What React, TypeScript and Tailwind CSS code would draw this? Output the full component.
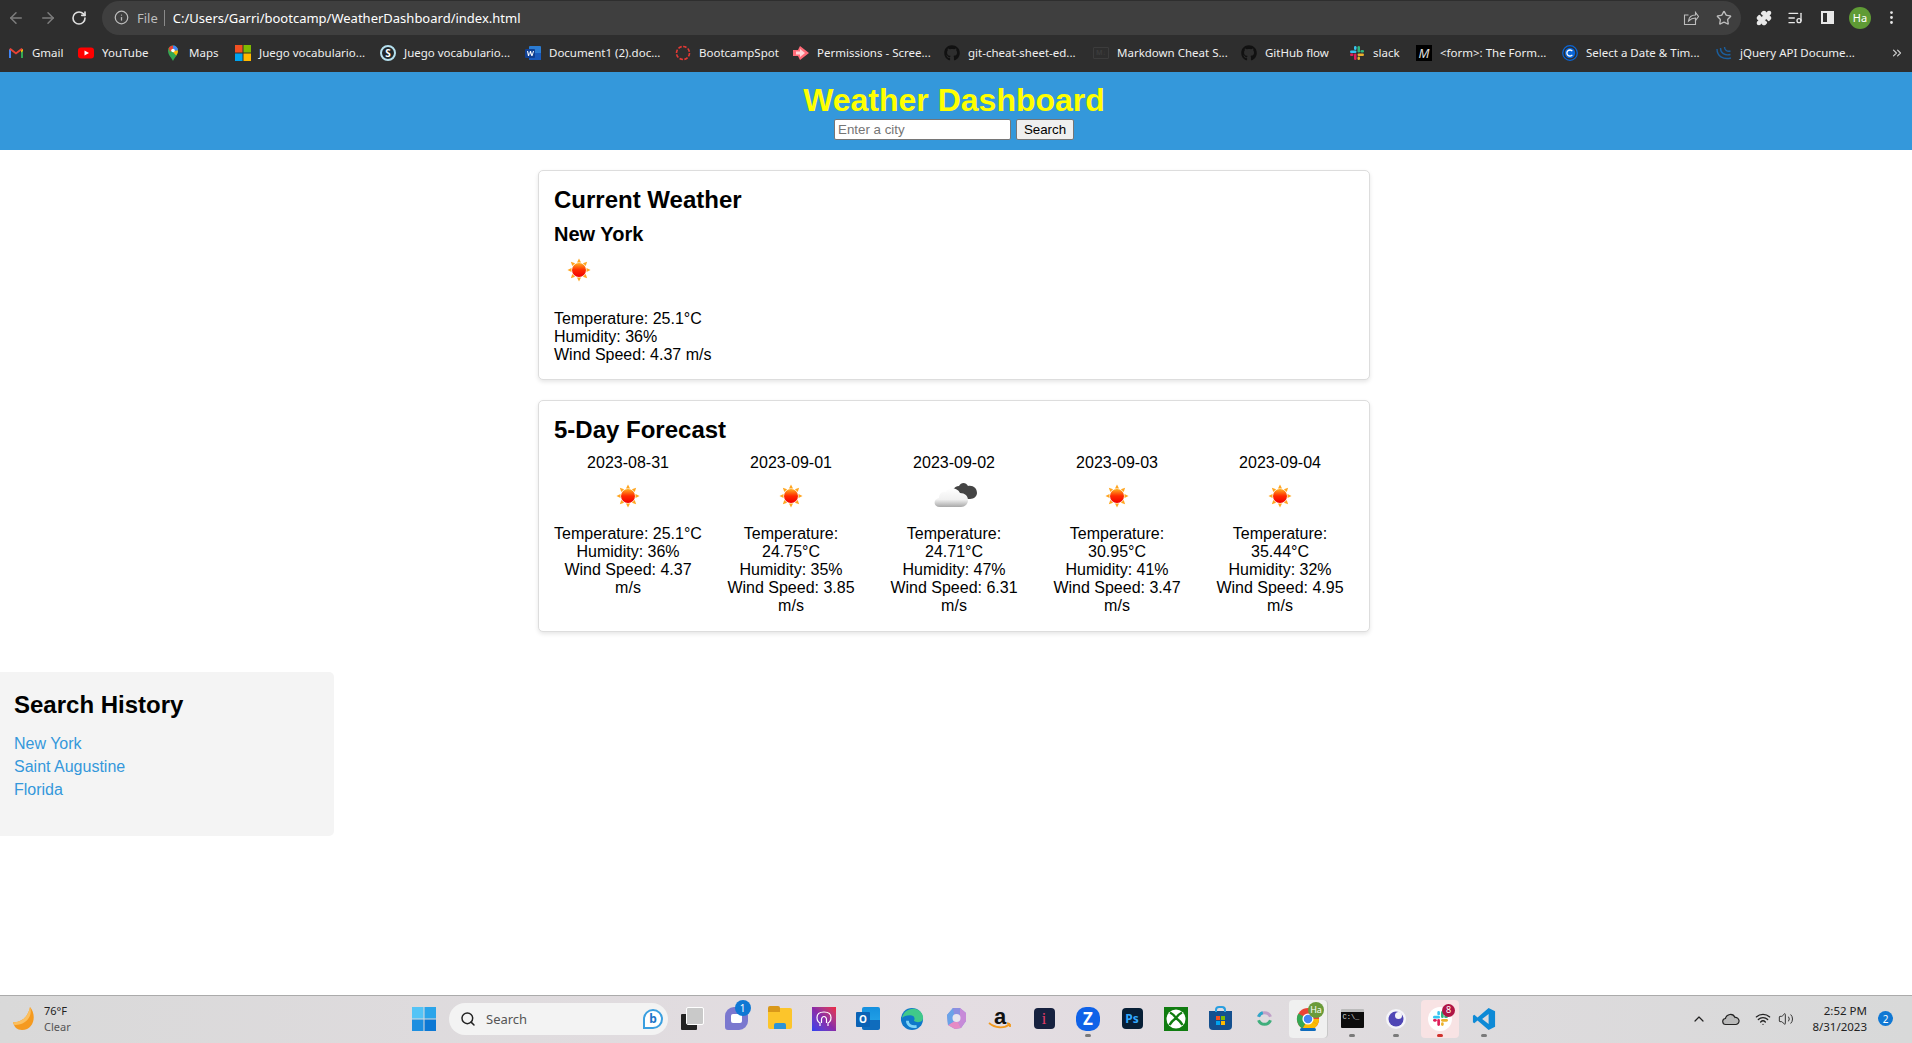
import type { ReactNode } from "react";
import { ArrowLeft, ArrowRight, RotateCw, Info, Star, Puzzle, ListMusic, MoreVertical, ChevronsRight, ChevronUp, Search, Wifi, Volume2 } from "lucide-react";
import { FaGithub } from "react-icons/fa";

const Sun = () => (
  <svg width="50" height="50" viewBox="0 0 50 50">
    <defs>
      <linearGradient id="sunfill" x1="0" y1="0" x2="0" y2="1">
        <stop offset="0" stopColor="#ffb020" />
        <stop offset="0.5" stopColor="#ff2a00" />
        <stop offset="1" stopColor="#f00000" />
      </linearGradient>
    </defs>
    {[0, 45, 90, 135, 180, 225, 270, 315].map((a) => (
      <polygon key={a} points="25,13.5 23,17.5 27,17.5" fill="#ffa51f" transform={`rotate(${a} 25 25)`} />
    ))}
    <circle cx="25" cy="25" r="7" fill="url(#sunfill)" />
  </svg>
);

const Cloud = () => (
  <svg width="50" height="50" viewBox="0 0 50 50">
    <defs>
      <linearGradient id="cloudfill" x1="0" y1="0" x2="0" y2="1">
        <stop offset="0" stopColor="#ffffff" />
        <stop offset="0.6" stopColor="#f0f0f0" />
        <stop offset="1" stopColor="#a8a8a8" />
      </linearGradient>
    </defs>
    <path d="M24 27c-3-6 1-12 6-12 2-4 7-4 9 0 5-1 9 2 9 7 0 3-3 6-7 6H30z" fill="#444" />
    <path d="M11 36c-7 0-7-8-1-9 0-4 3-7 7-6 2-5 11-5 14 1 5 0 8 3 8 7 0 4-3 7-7 7z" fill="url(#cloudfill)" />
  </svg>
);

const forecast = [
  { date: "2023-08-31", temp: "25.1", hum: "36", wind: "4.37", cloud: false },
  { date: "2023-09-01", temp: "24.75", hum: "35", wind: "3.85", cloud: false },
  { date: "2023-09-02", temp: "24.71", hum: "47", wind: "6.31", cloud: true },
  { date: "2023-09-03", temp: "30.95", hum: "41", wind: "3.47", cloud: false },
  { date: "2023-09-04", temp: "35.44", hum: "32", wind: "4.95", cloud: false },
];

const Gmail = () => (
  <svg width="16" height="16" viewBox="0 0 16 16">
    <path d="M1 13V4l2 1v8z" fill="#4285f4" />
    <path d="M15 13V4l-2 1v8z" fill="#34a853" />
    <path d="M1 4.2 2.6 3 8 7.2 13.4 3 15 4.2 8 9.6z" fill="#ea4335" />
    <path d="M13 5.5 15 4v2l-2 1.5z" fill="#fbbc04" />
  </svg>
);
const YouTube = () => (
  <svg width="16" height="16" viewBox="0 0 16 16">
    <rect x="0" y="2.5" width="16" height="11" rx="3" fill="#f00" />
    <polygon points="6.5,5.5 11,8 6.5,10.5" fill="#fff" />
  </svg>
);
const Maps = () => (
  <svg width="16" height="18" viewBox="0 0 16 18">
    <path d="M8 17C6 13 3 11 3 6.5a5 5 0 0 1 10 0C13 11 10 13 8 17z" fill="#34a853" />
    <path d="M3.6 4.2A5 5 0 0 1 8 1.5V4.5L5 8z" fill="#ea4335" />
    <path d="M8 1.5a5 5 0 0 1 5 5l-3 .5-2-2.5z" fill="#4285f4" />
    <path d="M13 6.5c0 2-.8 3.5-1.8 5L7 7z" fill="#fbbc04" />
    <circle cx="8" cy="6.5" r="1.8" fill="#fff" />
  </svg>
);
const Microsoft = () => (
  <svg width="16" height="16" viewBox="0 0 16 16">
    <rect width="7.5" height="7.5" fill="#f25022" />
    <rect x="8.5" width="7.5" height="7.5" fill="#7fba00" />
    <rect y="8.5" width="7.5" height="7.5" fill="#00a4ef" />
    <rect x="8.5" y="8.5" width="7.5" height="7.5" fill="#ffb900" />
  </svg>
);
const SkypeS = () => (
  <span className="flex h-4 w-4 items-center justify-center rounded-full border-2 border-[#b5e0ee] bg-[#20262a] text-[10px] font-bold text-white">
    S
  </span>
);
const Word = () => (
  <svg width="16" height="16" viewBox="0 0 16 16">
    <rect x="4" y="1" width="12" height="14" rx="1" fill="#2b7cd3" />
    <rect x="4" y="8" width="12" height="7" fill="#185abd" />
    <rect x="0" y="4" width="10" height="9" rx="1" fill="#103f91" />
    <path d="M2 6h1l1 3.5L5 6h1l1 3.5L8 6h1l-1.5 5h-1L5 8l-1 3H3z" fill="#fff" />
  </svg>
);
const Ring = () => (
  <svg width="16" height="16" viewBox="0 0 16 16">
    <circle cx="8" cy="8" r="6.5" fill="none" stroke="#e53935" strokeWidth="1.6" strokeDasharray="3.5 1.5" />
  </svg>
);
const Permissions = () => (
  <svg width="16" height="16" viewBox="0 0 16 16">
    <path d="M0 5h5l2-4 9 7-9 7-2-4H0z" fill="#ff6b78" />
    <path d="M3 6.5h4V4l5 4-5 4V9.5H3z" fill="#ffd5d8" />
  </svg>
);
const Markdown = () => (
  <span className="flex h-[12px] w-4 items-center justify-center rounded-[1px] border border-[#3c3c3c] text-[7px] font-bold leading-none text-[#3c3c3c]">
    M↓
  </span>
);
const Slack = ({ size = 16 }: { size?: number }) => (
  <svg width={size} height={size} viewBox="0 0 16 16">
    <rect x="1" y="5.5" width="6.5" height="2.5" rx="1.25" fill="#36c5f0" />
    <rect x="5" y="1" width="2.5" height="4" rx="1.25" fill="#36c5f0" />
    <rect x="8.5" y="1" width="2.5" height="6.5" rx="1.25" fill="#2eb67d" />
    <rect x="11.5" y="5" width="3.5" height="2.5" rx="1.25" fill="#2eb67d" />
    <rect x="8.5" y="8.5" width="6.5" height="2.5" rx="1.25" fill="#ecb22e" />
    <rect x="8.5" y="11.5" width="2.5" height="3.5" rx="1.25" fill="#ecb22e" />
    <rect x="5" y="8.5" width="2.5" height="6.5" rx="1.25" fill="#e01e5a" />
    <rect x="1" y="8.5" width="3.5" height="2.5" rx="1.25" fill="#e01e5a" />
  </svg>
);
const MdnM = () => (
  <span className="flex h-4 w-4 items-center justify-center bg-black text-[13px] italic text-[#ddd]">M</span>
);
const Calendly = () => (
  <svg width="16" height="16" viewBox="0 0 16 16">
    <circle cx="8" cy="8" r="7.3" fill="none" stroke="#0a66d8" strokeWidth="1.2" />
    <circle cx="8" cy="8" r="5.2" fill="#0a66d8" />
    <path d="M10.3 6.2A3 3 0 1 0 10.3 9.8" fill="none" stroke="#fff" strokeWidth="1.3" />
  </svg>
);
const JQuery = () => (
  <svg width="16" height="16" viewBox="0 0 16 16" fill="none" stroke="#1b5f9e" strokeWidth="1.4">
    <path d="M1 4c0 7 6 11 14 9" />
    <path d="M4.5 3c0 5 4 8 10 6.5" />
    <path d="M8.5 2c0 3 2.5 5 6 4" />
  </svg>
);

const bookmarks = [
  { icon: <Gmail />, label: "Gmail", w: "w-[70px]" },
  { icon: <YouTube />, label: "YouTube", w: "w-[87px]" },
  { icon: <Maps />, label: "Maps", w: "w-[70px]" },
  { icon: <Microsoft />, label: "Juego vocabulario...", w: "w-[145px]" },
  { icon: <SkypeS />, label: "Juego vocabulario...", w: "w-[145px]" },
  { icon: <Word />, label: "Document1 (2).doc...", w: "w-[150px]" },
  { icon: <Ring />, label: "BootcampSpot", w: "w-[118px]" },
  { icon: <Permissions />, label: "Permissions - Scree...", w: "w-[151px]" },
  { icon: <FaGithub className="text-[16px] text-[#111]" />, label: "git-cheat-sheet-ed...", w: "w-[149px]" },
  { icon: <Markdown />, label: "Markdown Cheat S...", w: "w-[148px]" },
  { icon: <FaGithub className="text-[16px] text-[#111]" />, label: "GitHub flow", w: "w-[108px]" },
  { icon: <Slack />, label: "slack", w: "w-[67px]" },
  { icon: <MdnM />, label: "<form>: The Form...", w: "w-[146px]" },
  { icon: <Calendly />, label: "Select a Date & Tim...", w: "w-[154px]" },
  { icon: <JQuery />, label: "jQuery API Docume...", w: "w-[150px]" },
];

function BrowserBar() {
  return (
    <div className="h-[72px] shrink-0 bg-[#2e2e2e] text-[#e8e8e8]">
      <div className="flex h-[35px] items-center">
        <div className="flex w-[102px] shrink-0 items-center gap-[14px] pl-[7px]">
          <ArrowLeft size={18} className="text-[#7d7d7d]" />
          <ArrowRight size={18} className="text-[#7d7d7d]" />
          <RotateCw size={16} strokeWidth={2.4} className="text-[#e0e0e0]" />
        </div>
        <div className="flex h-[34px] w-[1639px] shrink-0 items-center rounded-full bg-[#3f3f3f] pl-[12px] pr-[9px] font-['Noto_Sans',sans-serif]">
          <Info size={15} className="text-[#bdbdbd]" />
          <span className="ml-[8px] text-[13px] text-[#bdbdbd]">File</span>
          <span className="ml-[6px] h-[16px] w-px bg-[#8a8a8a]" />
          <span className="ml-[8px] text-[13px] text-white">C:/Users/Garri/bootcamp/WeatherDashboard/index.html</span>
          <span className="ml-auto flex items-center gap-[17px] text-[#bdbdbd]">
            <svg width="16" height="16" viewBox="0 0 16 16" fill="none" stroke="currentColor" strokeWidth="1.1">
              <path d="M12.5 9.5v5H1.5V5h4" />
              <path d="M5.5 11c.5-4 3-6 7-6V2.5l3 4-3 4V8c-3 0-5 1-7 3z" />
            </svg>
            <Star size={16} />
          </span>
        </div>
        <div className="flex flex-1 items-center pl-[15px]">
          <Puzzle size={16} fill="#e8e8e8" className="text-[#e8e8e8]" />
          <ListMusic size={16} className="ml-[15px]" />
          <span className="ml-[18px] flex h-[13px] w-[13px] justify-end border-2 border-[#e8e8e8]">
            <span className="h-full w-[5px] bg-[#e8e8e8]" />
          </span>
          <span className="ml-[15px] flex h-[22px] w-[22px] items-center justify-center rounded-full bg-[#5f9b35] font-['Noto_Sans',sans-serif] text-[11px] text-white">Ha</span>
          <MoreVertical size={17} className="ml-[12px]" />
        </div>
      </div>
      <div className="flex h-[35px] items-center pl-[8px] font-['Noto_Sans',sans-serif] text-[11.5px] text-[#f0f0f0]">
        {bookmarks.map((b, i) => (
          <div key={i} className={`${b.w} flex shrink-0 items-center gap-[8px] whitespace-nowrap`}>
            <span className="flex w-4 shrink-0 justify-center">{b.icon}</span>
            <span>{b.label}</span>
          </div>
        ))}
        <ChevronsRight size={14} className="ml-auto mr-[8px] text-[#cfcfcf]" />
      </div>
    </div>
  );
}

const TaskIcon = ({ children, dot, tile }: { children: ReactNode; dot?: string; tile?: string }) => (
  <div className="relative flex h-[44px] w-[44px] shrink-0 items-center justify-center">
    {tile && <span className={`absolute inset-y-[3px] inset-x-[3px] rounded-[4px] ${tile}`} />}
    <span className="relative flex items-center justify-center">{children}</span>
    {dot && <span className={`absolute bottom-[4px] left-1/2 h-[3px] w-[6px] -translate-x-1/2 rounded-full ${dot}`} />}
  </div>
);

function Taskbar() {
  return (
    <div className="flex h-[48px] shrink-0 items-center border-t border-[#ababab] bg-gradient-to-r from-[#d9d9d9] via-[#e4dde2] to-[#d8d9d9] pb-[2px] font-['Noto_Sans',sans-serif] text-[#222]">
      <div className="flex w-[412px] shrink-0 items-center pl-[13px]">
        <svg width="24" height="24" viewBox="0 0 24 24">
          <path d="M17 0C24 8 21 23 9 23 4 23 1 20 0 15 7 16 15 11 17 0z" fill="#f59a1f" />
          <path d="M17 0C20 8 14 18 2 18c-1 0-1.5-1-2-3C7 16 15 11 17 0z" fill="#fbc060" />
        </svg>
        <div className="ml-[7px] text-[11px] leading-[16px]">
          <div>76°F</div>
          <div className="text-[#555]">Clear</div>
        </div>
      </div>
      <svg width="24" height="24" viewBox="0 0 24 24" className="shrink-0">
        <rect x="0" y="0" width="11.5" height="11.5" fill="#54c4f6" />
        <rect x="12.5" y="0" width="11.5" height="11.5" fill="#2ba5ea" />
        <rect x="0" y="12.5" width="11.5" height="11.5" fill="#1d8fe0" />
        <rect x="12.5" y="12.5" width="11.5" height="11.5" fill="#0c78d4" />
      </svg>
      <div className="ml-[13px] flex h-[32px] w-[219px] shrink-0 items-center rounded-full bg-[#f3f3f3] pl-[11px] pr-[5px] text-[13px] text-[#555]">
        <Search size={16} strokeWidth={2.2} className="text-[#222]" />
        <span className="ml-[10px]">Search</span>
        <span className="ml-auto flex h-[20px] w-[20px] items-center justify-center rounded-full rounded-bl-[3px] border-2 border-[#3a9fe0] bg-white text-[12px] font-bold leading-none text-[#1b74c8]">b</span>
      </div>
      <div className="ml-[2px] flex items-center">
        <TaskIcon>
          <span className="relative block h-[22px] w-[22px]">
            <span className="absolute bottom-0 left-0 h-[16px] w-[16px] rounded-[1px] bg-[#222]" />
            <span className="absolute right-0 top-0 h-[16px] w-[16px] rounded-[1px] bg-[#c9c9c9] outline outline-1 outline-white" />
          </span>
        </TaskIcon>
        <TaskIcon>
          <span className="flex h-[23px] w-[23px] items-center justify-center rounded-[9px] rounded-bl-[3px] bg-[#7b78cf]">
            <span className="h-[9px] w-[11px] rounded-[2px] bg-white" />
          </span>
          <span className="absolute -right-[3px] -top-[7px] flex h-[16px] w-[16px] items-center justify-center rounded-full bg-[#0f78d4] text-[10px] text-white">1</span>
        </TaskIcon>
        <TaskIcon>
          <span className="relative block h-[21px] w-[24px] rounded-[2px] bg-[#fcc52b]">
            <span className="absolute -top-[2px] left-0 h-[6px] w-[12px] rounded-t-[2px] bg-[#d9981a]" />
            <span className="absolute bottom-0 left-[6px] h-[6px] w-[12px] rounded-t-[2px] bg-[#2b93d8]" />
          </span>
        </TaskIcon>
        <TaskIcon>
          <span className="flex h-[24px] w-[24px] items-center justify-center bg-gradient-to-tr from-[#2a3ff0] via-[#8a2aa8] to-[#f0243c]">
            <svg width="18" height="18" viewBox="0 0 18 18" fill="none" stroke="#fff" strokeWidth="1.2">
              <path d="M5 16v-3c-2-1-3-3-3-5.5C2 4 5 2 9 2s7 2 7 5.5c0 2.5-1 4.5-3 5.5v3" />
              <path d="M6.5 13V9.5a2.5 3 0 1 1 5 0V13" />
            </svg>
          </span>
        </TaskIcon>
        <TaskIcon>
          <span className="relative block h-[24px] w-[24px]">
            <span className="absolute right-0 top-0 h-[22px] w-[18px] rounded-[2px] bg-gradient-to-b from-[#1490df] to-[#28a8ea]" />
            <span className="absolute bottom-[1px] right-0 h-[10px] w-[18px] rounded-b-[2px] bg-[#0f6cbd]" />
            <span className="absolute bottom-[4px] left-0 flex h-[15px] w-[14px] items-center justify-center rounded-[1px] bg-[#0b62b5] text-[10px] font-bold text-white">O</span>
          </span>
        </TaskIcon>
        <TaskIcon>
          <svg width="24" height="24" viewBox="0 0 26 26">
            <circle cx="13" cy="13" r="12" fill="#0f78c9" />
            <path d="M2 13C3 4 13-1 21 4c4 3 5 8 3 11-2 2-7 2-9 0 2-3 0-6-4-6-5 0-9 2-9 4z" fill="#40c88a" />
            <path d="M8 15c0 5 5 7 10 6" stroke="#7fd4f7" strokeWidth="3" fill="none" />
          </svg>
        </TaskIcon>
        <TaskIcon>
          <svg width="21" height="23" viewBox="0 0 21 23">
            <path d="M7 1 14 1 20 6 20 14 15 21 9 22 2 18 1 8z" fill="#8d8fe0" />
            <path d="M14 1 20 6 20 14 15 21 12 15 14 9z" fill="#c78ad8" />
            <path d="M2 18 9 22 15 21 12 15 7 15z" fill="#e58bc5" />
            <path d="M7 1 1 8 2 18 7 15 8 7z" fill="#6aa3e8" />
            <circle cx="10.5" cy="11" r="4" fill="#e9e6ee" />
          </svg>
        </TaskIcon>
        <TaskIcon>
          <span className="relative flex h-[22px] w-[24px] justify-center font-['Liberation_Sans',sans-serif] text-[22px] font-bold leading-[18px] text-[#111]">
            a
            <svg className="absolute bottom-0 left-0" width="24" height="8" viewBox="0 0 24 8">
              <path d="M1 1c6 5 15 6 21 1M22 2l-3-1M22 2l0 3" fill="none" stroke="#f29a1f" strokeWidth="1.8" />
            </svg>
          </span>
        </TaskIcon>
        <TaskIcon>
          <span className="flex h-[21px] w-[21px] items-center justify-center rounded-[4px] bg-[#16213f] font-['Liberation_Serif',serif] text-[16px] text-[#ec3d69]">i</span>
        </TaskIcon>
        <TaskIcon dot="bg-[#7a7a7a]">
          <span className="flex h-[24px] w-[24px] items-center justify-center rounded-[10px] bg-[#0f62e8] text-[17px] font-bold leading-none text-white">
            Z
          </span>
        </TaskIcon>
        <TaskIcon>
          <span className="flex h-[21px] w-[21px] items-center justify-center rounded-[4px] bg-[#071f36] text-[12px] font-bold text-[#31a8ff]">Ps</span>
        </TaskIcon>
        <TaskIcon>
          <span className="flex h-[24px] w-[24px] items-center justify-center bg-[#107c10]">
            <svg width="20" height="20" viewBox="0 0 20 20">
              <circle cx="10" cy="10" r="9.5" fill="#fff" />
              <path d="M4 3.5C7 5 9 7.500 10 9 11 7.500 13 5 16 3.500M3.500 16C5 13 8 10.500 10 9c2 1.500 5 4 6.500 7" fill="none" stroke="#107c10" strokeWidth="2.4" />
            </svg>
          </span>
        </TaskIcon>
        <TaskIcon>
          <span className="relative block h-[19px] w-[23px] translate-y-[2px] rounded-b-[4px] bg-[#14508f]">
            <span className="absolute -top-[5px] left-[6px] h-[6px] w-[11px] rounded-t-[4px] border-2 border-b-0 border-[#2a9fe0]" />
            <span className="absolute left-[7px] top-[5px] grid grid-cols-2 gap-px">
              <span className="h-[4px] w-[4px] bg-[#f25022]" />
              <span className="h-[4px] w-[4px] bg-[#7fba00]" />
              <span className="h-[4px] w-[4px] bg-[#00a4ef]" />
              <span className="h-[4px] w-[4px] bg-[#ffb900]" />
            </span>
          </span>
        </TaskIcon>
        <TaskIcon>
          <svg width="17" height="17" viewBox="0 0 20 20" fill="none" strokeWidth="3.5">
            <path d="M3 8a7.5 7.5 0 0 1 14 0" stroke="#c0a0c8" />
            <path d="M3 8a7.5 7.5 0 0 1 5-5" stroke="#2da8c9" />
            <path d="M17 12a7.5 7.5 0 0 1-14 0" stroke="#3fae7c" />
          </svg>
        </TaskIcon>
        <TaskIcon tile="bg-[#f0f0f0] shadow-[1px_0_0_#c8c8c8]">
          <svg width="24" height="24" viewBox="0 0 26 26">
            <circle cx="13" cy="13" r="12" fill="#ea4335" />
            <path d="M13 13 23.4 19A12 12 0 0 0 25 13z" fill="#fbbc04" />
            <path d="M13 13 23.4 19A12 12 0 0 1 7 23.4z" fill="#fbbc04" />
            <path d="M13 13 7 23.4A12 12 0 0 1 2.6 7z" fill="#34a853" />
            <circle cx="13" cy="13" r="6" fill="#fff" />
            <circle cx="13" cy="13" r="4.6" fill="#4285f4" />
          </svg>
          <span className="absolute -right-[4px] -top-[5px] flex h-[16px] w-[16px] items-center justify-center rounded-full bg-[#6a9b3a] text-[9px] text-white">Ha</span>
          <span className="absolute left-1/2 top-[21px] h-[3px] w-[16px] -translate-x-1/2 rounded-full bg-[#0f6cbd]" />
        </TaskIcon>
        <TaskIcon dot="bg-[#7a7a7a]">
          <span className="block h-[19px] w-[23px] rounded-[1px] border-t-[3px] border-[#bbb] bg-[#0c0c0c] pl-[2px] pt-[1px] font-['Liberation_Mono',monospace] text-[7px] leading-[8px] text-[#ddd]">C:\_</span>
        </TaskIcon>
        <TaskIcon dot="bg-[#7a7a7a]">
          <svg width="20" height="20" viewBox="0 0 20 20">
            <circle cx="10" cy="10" r="10" fill="#f4f4f8" />
            <circle cx="10" cy="10" r="7.5" fill="#4f46b5" />
            <circle cx="12.5" cy="6.5" r="3.5" fill="#f4f4f8" />
          </svg>
        </TaskIcon>
        <TaskIcon dot="bg-[#d0312d]" tile="bg-[#f8e3e4]">
          <span className="flex h-[24px] w-[24px] items-center justify-center rounded-full bg-white">
            <Slack size={17} />
          </span>
          <span className="absolute -right-[3px] -top-[3px] flex h-[13px] w-[13px] items-center justify-center rounded-full bg-[#b01545] text-[9px] text-white">8</span>
        </TaskIcon>
        <TaskIcon dot="bg-[#7a7a7a]">
          <svg width="24" height="24" viewBox="0 0 26 26">
            <path d="M18 1 25 4.5V21.5L18 25 6 14.5 2.5 17.5 1 16.5V9.5L2.5 8.5 6 11.5zM18 7.5 11 13 18 18.5z" fill="#0e8ad6" />
          </svg>
        </TaskIcon>
      </div>
      <div className="ml-auto flex items-center pr-[19px]">
        <ChevronUp size={16} strokeWidth={1.8} className="mr-[15px] text-[#222]" />
        <svg width="18" height="14" viewBox="0 0 18 14" className="mr-[15px]">
          <path d="M4 12.5a3 3 0 0 1-.5-6 5 5 0 0 1 9.5-1 3.5 3.5 0 0 1 1 7z" fill="#b9b9b9" stroke="#222" strokeWidth="1.2" />
        </svg>
        <Wifi size={16} className="mr-[7px] text-[#222]" />
        <Volume2 size={16} strokeWidth={1.5} className="text-[#333]" />
        <div className="ml-[18px] text-right text-[11.5px] leading-[16px] text-[#222]">
          <div>2:52 PM</div>
          <div>8/31/2023</div>
        </div>
        <span className="ml-[11px] flex h-[15px] w-[15px] items-center justify-center rounded-full bg-[#0f78d4] text-[10px] text-white">2</span>
      </div>
    </div>
  );
}

export default function App() {
  return (
    <div className="flex h-[1043px] flex-col overflow-hidden bg-white font-['Liberation_Sans',Arial,sans-serif] text-base leading-[18px] text-black">
      <BrowserBar />
      <header className="flex h-[78px] shrink-0 flex-col items-center bg-[#3498db] pr-[4px] pt-[10px]">
        <h1 className="text-[32px] font-bold leading-[37px] text-[#ffff00]">Weather Dashboard</h1>
        <div className="flex items-center gap-[5px]">
          <input
            placeholder="Enter a city"
            className="h-[21px] w-[177px] rounded-[2px] border border-[#767676] bg-white px-[3px] text-[13.33px] text-black placeholder:text-[#757575]"
          />
          <button className="h-[21px] w-[58px] rounded-[2px] border border-[#767676] bg-[#efefef] text-[13.33px] text-black">Search</button>
        </div>
      </header>
      <main className="flex-1">
        <div className="pr-[4px]">
          <div className="mx-auto mt-[20px] w-[832px]">
            <section className="h-[210px] rounded-[5px] border border-[#ddd] bg-white p-[15px] shadow-[0_2px_4px_rgba(0,0,0,0.1)]">
              <h2 className="text-2xl font-bold leading-[28px]">Current Weather</h2>
              <h3 className="mt-[9px] text-xl font-bold leading-[23px]">New York</h3>
              <div className="-mt-[1px]">
                <Sun />
              </div>
              <p className="mt-[15px]">Temperature: 25.1°C</p>
              <p>Humidity: 36%</p>
              <p>Wind Speed: 4.37 m/s</p>
            </section>
            <section className="mt-[20px] h-[232px] rounded-[5px] border border-[#ddd] bg-white p-[15px] shadow-[0_2px_4px_rgba(0,0,0,0.1)]">
              <h2 className="text-2xl font-bold leading-[28px]">5-Day Forecast</h2>
              <div className="mt-[10px] grid grid-cols-5 gap-[15px] text-center">
                {forecast.map((d) => (
                  <div key={d.date}>
                    <p>{d.date}</p>
                    <div className="-mt-[1px] flex justify-center">{d.cloud ? <Cloud /> : <Sun />}</div>
                    <p className="mt-[4px]">Temperature: {d.temp}°C</p>
                    <p>Humidity: {d.hum}%</p>
                    <p>Wind Speed: {d.wind} m/s</p>
                  </div>
                ))}
              </div>
            </section>
          </div>
        </div>
        <aside className="mt-[40px] h-[164px] w-[334px] rounded-r-[5px] bg-[#f4f4f4] px-[14px] pt-[19px]">
          <h2 className="text-2xl font-bold leading-[28px]">Search History</h2>
          <ul className="mt-[16px] space-y-[5px] text-[#3498db]">
            <li>New York</li>
            <li>Saint Augustine</li>
            <li>Florida</li>
          </ul>
        </aside>
      </main>
      <Taskbar />
    </div>
  );
}
